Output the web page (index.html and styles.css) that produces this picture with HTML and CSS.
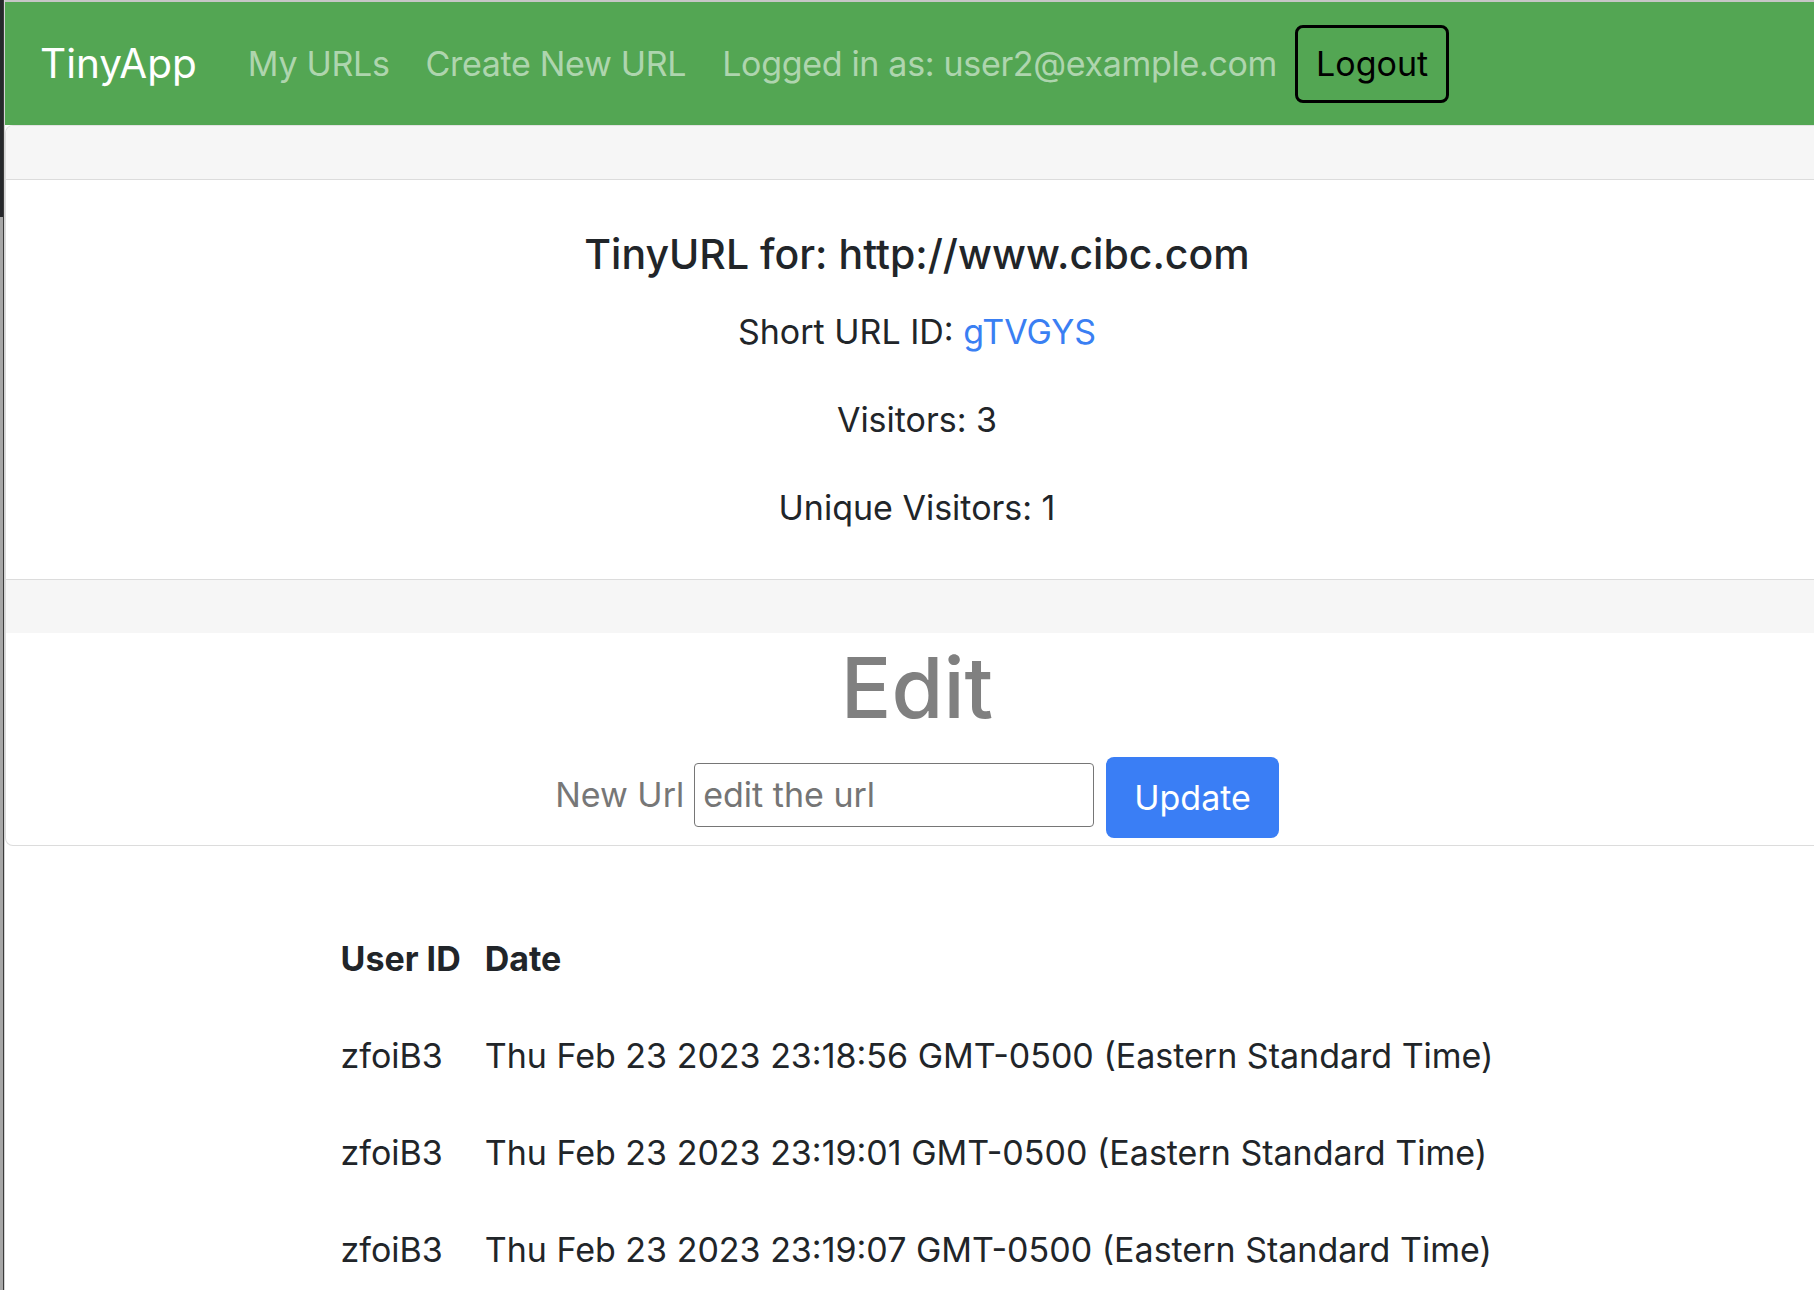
FILE: index.html
```html
<!DOCTYPE html>
<html lang="en">
<head>
<meta charset="utf-8">
<title>TinyApp</title>
<link rel="stylesheet" href="styles.css">
</head>
<body>
<div class="strip"></div>
<div class="page">
  <nav class="navbar">
    <a class="brand" href="#">TinyApp</a>
    <ul class="nav">
      <li><a class="nav-link" href="#">My URLs</a></li>
      <li><a class="nav-link" href="#">Create New URL</a></li>
      <li><span class="nav-link">Logged in as: user2@example.com</span></li>
      <li><button class="logout" type="button">Logout</button></li>
    </ul>
  </nav>
  <main class="main">
    <section class="card">
      <div class="card-header"></div>
      <div class="card-body">
        <h5 class="card-title">TinyURL for: http://www.cibc.com</h5>
        <p class="card-text">Short URL ID: <a class="short-link" href="#">gTVGYS</a></p>
        <p class="card-text">Visitors: 3</p>
        <p class="card-text">Unique Visitors: 1</p>
      </div>
      <div class="card-footer"></div>
      <div class="edit">
        <h1 class="edit-title">Edit</h1>
        <form class="edit-form">
          <label class="edit-label" for="newurl">New Url</label>
          <input class="edit-input" id="newurl" type="text" placeholder="edit the url">
          <button class="btn-update" type="button">Update</button>
        </form>
      </div>
    </section>
    <table class="visits">
      <thead>
        <tr><th>User ID</th><th>Date</th></tr>
      </thead>
      <tbody>
        <tr><td>zfoiB3</td><td>Thu Feb 23 2023 23:18:56 GMT-0500 (Eastern Standard Time)</td></tr>
        <tr><td>zfoiB3</td><td>Thu Feb 23 2023 23:19:01 GMT-0500 (Eastern Standard Time)</td></tr>
        <tr><td>zfoiB3</td><td>Thu Feb 23 2023 23:19:07 GMT-0500 (Eastern Standard Time)</td></tr>
      </tbody>
    </table>
  </main>
</div>
</body>
</html>
```
FILE: styles.css
```css
* { box-sizing: border-box; }

html, body {
  margin: 0;
  height: 1290px;
  overflow: hidden;
  background: #ffffff;
}

body {
  display: flex;
  font-family: "Inter", "Noto Sans", sans-serif;
  font-size: 34px;
  line-height: 51px;
  color: #212529;
}

.strip {
  flex: 0 0 5px;
  background: linear-gradient(#26282b 0 217px, #a6a6a6 217px);
  border-right: 1px solid #d4d4d4;
  box-shadow: inset -1px 0 0 #3a3a3a;
}

.page {
  flex: 0 0 1824px;
  width: 1824px;
}

/* NAVBAR */
.navbar {
  height: 125px;
  border-top: 2px solid #c6c6c6;
  background: #53a653;
  display: flex;
  align-items: center;
  padding-left: 35px;
}

.brand {
  font-size: 40.5px;
  color: #ffffff;
  text-decoration: none;
  margin-right: 33px;
  line-height: 51px;
}

.nav {
  list-style: none;
  margin: 0;
  padding: 0;
  display: flex;
  align-items: center;
}

.nav-link {
  display: block;
  padding: 0 18px;
  color: rgba(255, 255, 255, 0.55);
  text-decoration: none;
  font-size: 34px;
  letter-spacing: -0.32px;
}

.logout {
  font-family: inherit;
  font-size: 34px;
  line-height: 51px;
  color: #000000;
  background: transparent;
  border: 3px solid #000000;
  border-radius: 8px;
  padding: 10px 18px 11px;
}

/* CARD */
.card {
  width: 1824px;
  border: 1px solid #dcdcdc;
  border-top-color: #e2e2e2;
  border-radius: 8px;
  overflow: hidden;
}

.card-header {
  height: 54px;
  background: #f6f6f6;
  border-bottom: 1px solid #dcdcdc;
}

.card-body {
  padding: 48px 0 46px;
  text-align: center;
}

.card-title {
  font-size: 41px;
  font-weight: 500;
  line-height: 52px;
  margin: 0 0 26px;
}

.card-text {
  margin: 0 0 37px;
}

.card-text:last-child {
  margin-bottom: 0;
}

.short-link {
  color: #3a7ff3;
  text-decoration: none;
}

.card-footer {
  height: 54px;
  background: #f6f6f6;
  border-top: 1px solid #dcdcdc;
}

.edit {
  text-align: center;
  padding-bottom: 7px;
}

.edit-title {
  font-size: 84px;
  font-weight: 500;
  line-height: 103px;
  color: #808080;
  margin: 3px 0 18px;
}

.edit-form {
  display: flex;
  justify-content: center;
  align-items: center;
}

.edit-label {
  color: #777777;
  margin-right: 10px;
  margin-bottom: 6px;
}

.edit-input {
  width: 400px;
  height: 64px;
  border: 1px solid #767676;
  border-radius: 4px;
  padding: 0 8px;
  font-family: inherit;
  font-size: 34px;
  color: #212529;
  margin-right: 12px;
  margin-bottom: 6px;
}

.edit-input::placeholder {
  color: #757575;
}

.btn-update {
  font-family: inherit;
  font-size: 34px;
  line-height: 51px;
  color: #ffffff;
  background: #3a7ef5;
  border: 0;
  border-radius: 8px;
  padding: 15px 28px;
}

/* TABLE */
.visits {
  margin: 64px auto 0;
  border-collapse: collapse;
}

.visits th,
.visits td {
  padding: 23px 12px;
  text-align: left;
  white-space: nowrap;
}

.visits th {
  font-weight: 700;
}
```
